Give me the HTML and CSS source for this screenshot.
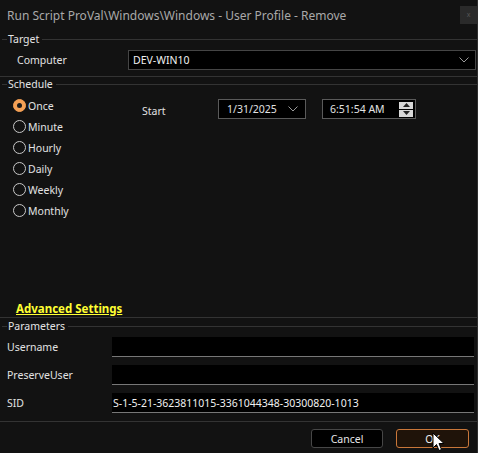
FILE: index.html
```html
<!DOCTYPE html>
<html>
<head>
<meta charset="utf-8">
<link rel="stylesheet" href="styles.css">
</head>
<body>
<div class="window">
  <div class="titlebar">
    <span class="title">Run Script ProVal\Windows\Windows - User Profile - Remove</span>
    <span class="close">x</span>
  </div>

  <div class="group target">
    <div class="legend"><span class="tick"></span><span class="legend-text">Target</span><span class="rule"></span></div>
    <div class="computer-row">
      <span class="computer-label">Computer</span>
      <div class="combo">
        <span>DEV-WIN10</span>
        <svg class="chev" width="10" height="6" viewBox="0 0 10 6"><path d="M0.5 0.5 L5 5 L9.5 0.5" fill="none" stroke="#9a9a9a" stroke-width="1"/></svg>
      </div>
    </div>
  </div>

  <div class="group schedule">
    <div class="legend"><span class="tick"></span><span class="legend-text">Schedule</span><span class="rule"></span></div>
    <div class="sched-body">
      <div class="radios">
        <div class="radio-item"><span class="radio checked"></span><span>Once</span></div>
        <div class="radio-item"><span class="radio"></span><span>Minute</span></div>
        <div class="radio-item"><span class="radio"></span><span>Hourly</span></div>
        <div class="radio-item"><span class="radio"></span><span>Daily</span></div>
        <div class="radio-item"><span class="radio"></span><span>Weekly</span></div>
        <div class="radio-item"><span class="radio"></span><span>Monthly</span></div>
      </div>
      <div class="start-row">
        <span class="start-label">Start</span>
        <div class="datebox">
          <span>1/31/2025</span>
          <svg class="chev" width="10" height="6" viewBox="0 0 10 6"><path d="M0.5 0.5 L5 5 L9.5 0.5" fill="none" stroke="#9a9a9a" stroke-width="1"/></svg>
        </div>
        <div class="timebox">
          <span>6:51:54 AM</span>
          <div class="spinner">
            <span class="spin"><svg width="7" height="4" viewBox="0 0 7 4"><path d="M0 4 L3.5 0 L7 4 Z" fill="#222"/></svg></span>
            <span class="spin"><svg width="7" height="4" viewBox="0 0 7 4"><path d="M0 0 L3.5 4 L7 0 Z" fill="#222"/></svg></span>
          </div>
        </div>
      </div>
    </div>
    <a class="advanced">Advanced Settings</a>
  </div>

  <div class="group params">
    <div class="legend"><span class="tick"></span><span class="legend-text">Parameters</span><span class="rule"></span></div>
    <div class="param-row"><span class="param-label">Username</span><div class="param-input"></div></div>
    <div class="param-row"><span class="param-label">PreserveUser</span><div class="param-input"></div></div>
    <div class="param-row"><span class="param-label">SID</span><div class="param-input">S-1-5-21-3623811015-3361044348-30300820-1013</div></div>
  </div>

  <div class="footer">
    <button class="btn cancel">Cancel</button>
    <button class="btn ok">OK</button>
  </div>

  <svg class="cursor" width="13" height="20" viewBox="0 0 13 20">
    <path d="M1 1 L1 16 L4.5 12.5 L7 18.5 L9.5 17.5 L7 11.5 L12 11.5 Z" fill="#fff" stroke="#000" stroke-width="1"/>
  </svg>
</div>
</body>
</html>
```

FILE: styles.css
```css
* { box-sizing: border-box; }
html, body { margin: 0; padding: 0; background: #ffffff; }
body {
  font-family: "Noto Sans", "Open Sans", sans-serif;
  font-size: 10.5px;
  color: #e2e2e2;
}
.window {
  position: relative;
  width: 478px;
  height: 453px;
  background: #121212;
  border-right: 1px solid #2e2e2e;
  overflow: hidden;
}
.titlebar {
  height: 31px;
  display: flex;
  align-items: center;
  justify-content: space-between;
  padding-left: 7px;
  background: #121212;
}
.title {
  font-size: 12px;
  color: #a9a9a9;
  padding-bottom: 1px;
}
.close {
  width: 17px;
  height: 18px;
  margin-bottom: 2px;
  background: #2a2a2a;
  color: #555;
  font-size: 7px;
  display: flex;
  align-items: center;
  justify-content: center;
}
.group {
  border-bottom: 1px solid #333;
}
.legend {
  display: flex;
  align-items: center;
  height: 16px;
}
.tick {
  width: 5px;
  height: 1px;
  background: #333;
  margin-left: 2px;
}
.legend-text {
  padding: 0 3px 0 1px;
  color: #e4e4e4;
}
.rule {
  flex: 1;
  height: 1px;
  background: #333;
}
.target { height: 46px; }
.computer-row {
  display: flex;
  align-items: center;
  margin-top: 3px;
  height: 20px;
}
.computer-label {
  width: 128px;
  padding-left: 17px;
}
.combo {
  width: 348px;
  height: 20px;
  background: #000;
  border: 1px solid #454545;
  display: flex;
  align-items: center;
  justify-content: space-between;
  padding: 0 6px 0 4px;
  color: #f0f0f0;
}
.schedule {
  height: 241px;
  display: flex;
  flex-direction: column;
}
.schedule .legend { height: 14px; }
.sched-body {
  display: flex;
  height: 200px;
}
.radios {
  padding-top: 4px;
  padding-left: 13px;
  width: 142px;
}
.radio-item {
  height: 21px;
  display: flex;
  align-items: center;
  gap: 2px;
}
.radio {
  width: 13px;
  height: 13px;
  border-radius: 50%;
  border: 1px solid #c8c8c8;
  display: flex;
  align-items: center;
  justify-content: center;
}
.radio.checked {
  background: #f4a055;
  border-color: #f4a055;
}
.radio.checked::after {
  content: "";
  width: 5px;
  height: 5px;
  border-radius: 50%;
  background: #1a1a1a;
}
.start-row {
  display: flex;
  align-items: flex-start;
  padding-top: 8px;
}
.start-label {
  width: 76px;
  padding-top: 5px;
}
.datebox {
  width: 88px;
  height: 20px;
  border: 1px solid #5a5a5a;
  background: #000;
  display: flex;
  align-items: center;
  justify-content: space-between;
  padding: 0 7px 0 8px;
  margin-right: 16px;
}
.timebox {
  width: 94px;
  height: 20px;
  border: 1px solid #5a5a5a;
  background: #000;
  display: flex;
  align-items: center;
  justify-content: space-between;
  padding: 0 2px 0 7px;
}
.spinner {
  display: flex;
  flex-direction: column;
  gap: 1px;
}
.spin {
  width: 14px;
  height: 7px;
  background: #d8d8d8;
  display: flex;
  align-items: center;
  justify-content: center;
}
.advanced {
  margin-top: 10px;
  margin-left: 16px;
  font-weight: bold;
  font-size: 11.5px;
  color: #ffff33;
  text-decoration: underline;
  line-height: 16px;
}
.params {
  height: 104px;
}
.params .legend { height: 16px; }
.param-row {
  display: flex;
  align-items: center;
  height: 20px;
  margin-top: 8px;
}
.params .legend + .param-row { margin-top: 3px; }
.param-label {
  width: 112px;
  padding-left: 7px;
}
.param-input {
  width: 362px;
  height: 20px;
  background: #000;
  border-bottom: 1px solid #777;
  display: flex;
  align-items: center;
  padding-left: 1px;
  color: #f0f0f0;
}
.footer {
  display: flex;
  justify-content: flex-end;
  gap: 13px;
  padding: 7px 8px 0 0;
}
.btn {
  font-family: "Noto Sans", "Open Sans", sans-serif;
  font-size: 10.5px;
  height: 19px;
  border-radius: 3px;
  padding: 0;
  display: flex;
  align-items: center;
  justify-content: center;
}
.cancel {
  width: 72px;
  background: #000;
  border: 1px solid #474747;
  color: #e6e6e6;
}
.ok {
  width: 73px;
  background: #1f1309;
  border: 1px solid #c9773a;
  color: #f0f0f0;
}
.cursor {
  position: absolute;
  left: 432px;
  top: 432px;
}
```
